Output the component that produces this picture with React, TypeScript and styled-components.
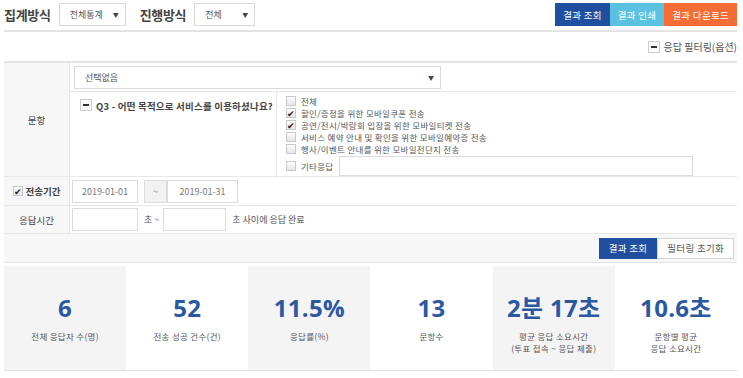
import React from 'react';
import styled, { createGlobalStyle } from 'styled-components';

const GlobalStyle = createGlobalStyle`
  html, body {
    margin: 0;
    padding: 0;
    background: #fff;
    font-family: "Noto Sans CJK KR", "Noto Sans", sans-serif;
    color: #444;
  }
  * { box-sizing: border-box; }
`;

const Page = styled.div`
  width: 743px;
  padding: 0 6px 0 4px;
`;

const TopBar = styled.div`
  display: flex;
  align-items: center;
  height: 32px;
  border-bottom: 2px solid #e3e3e3;
  padding-bottom: 2px;
`;

const BarTitle = styled.span`
  font-size: 13px;
  font-weight: 700;
  color: #444;
  margin-right: 8px;
  letter-spacing: -0.3px;
`;

const Select = styled.div<{ $w: number }>`
  width: ${({ $w }) => $w}px;
  height: 23px;
  border: 1px solid #d9d9d9;
  display: flex;
  align-items: center;
  justify-content: space-between;
  padding: 0 6px 0 10px;
  font-size: 9px;
  color: #555;
  margin-right: 14px;
  background: #fff;
`;

const Caret = styled.span`
  font-size: 6px;
  color: #444;
`;

const Spacer = styled.div`
  flex: 1;
`;

const BarButton = styled.button<{ $bg: string }>`
  height: 23px;
  border: none;
  background: ${({ $bg }) => $bg};
  color: #fff;
  font-family: inherit;
  font-size: 9.5px;
  padding: 0 8px;
  letter-spacing: 0.3px;
  margin-top: 1px;
`;

const FilterToggleRow = styled.div`
  display: flex;
  justify-content: flex-end;
  align-items: center;
  height: 29px;
  font-size: 10px;
  color: #555;
  gap: 4px;
  padding-right: 0;
`;

const MinusBox = styled.span`
  width: 12px;
  height: 12px;
  border: 1px solid #ccc;
  display: inline-flex;
  align-items: center;
  justify-content: center;
  background: #fff;
  flex-shrink: 0;
  &::after {
    content: '';
    width: 6px;
    height: 2px;
    background: #333;
  }
`;

const FilterTable = styled.div`
  border-top: 2px solid #e3e3e3;
  border-bottom: 1px solid #e3e3e3;
`;

const Row = styled.div<{ $h: number }>`
  display: flex;
  height: ${({ $h }) => $h}px;
  border-bottom: 1px solid #e8e8e8;
`;

const Label = styled.div`
  width: 66px;
  flex-shrink: 0;
  background: #f7f7f7;
  border-right: 1px solid #e5e5e5;
  display: flex;
  align-items: center;
  justify-content: center;
  font-size: 9.5px;
  color: #444;
  gap: 3px;
`;

const BoldLabel = styled.span`
  font-weight: 700;
  font-size: 9.5px;
`;

const Cell = styled.div`
  flex: 1;
  display: flex;
  flex-direction: column;
`;

const SubRow = styled.div<{ $h?: number }>`
  display: flex;
  align-items: center;
  height: ${({ $h }) => ($h ? `${$h}px` : 'auto')};
  flex-shrink: 0;
  padding: 0 4px;
  border-bottom: 1px solid #e8e8e8;
`;

const QuestionRow = styled.div`
  display: flex;
  flex: 1;
`;

const QuestionCell = styled.div`
  width: 207px;
  border-right: 1px solid #e8e8e8;
  display: flex;
  align-items: flex-start;
  gap: 4px;
  padding: 7px 0 0 10px;
  font-size: 9.5px;
  font-weight: 700;
  color: #444;
  letter-spacing: 0.2px;
`;

const OptionList = styled.div`
  flex: 1;
  display: flex;
  flex-direction: column;
  padding: 3px 0 2px 9px;
`;

const Option = styled.label`
  display: flex;
  align-items: center;
  gap: 5px;
  height: 12px;
  font-size: 8.5px;
  color: #555;
  letter-spacing: 0.3px;
`;

const Check = styled.span<{ $on?: boolean }>`
  width: 10px;
  height: 10px;
  border: 1px solid #c8c8c8;
  background: linear-gradient(#fdfdfd, #e6e6e6);
  display: inline-flex;
  align-items: center;
  justify-content: center;
  flex-shrink: 0;
  font-size: 9px;
  line-height: 1;
  color: #222;
  &::after {
    content: '${({ $on }) => ($on ? '✔' : '')}';
  }
`;

const EtcOption = styled(Option)`
  height: 21px;
`;

const TextInput = styled.div<{ $w: number; $h?: number; $gray?: boolean }>`
  width: ${({ $w }) => $w}px;
  height: ${({ $h }) => $h ?? 23}px;
  border: 1px solid #dcdcdc;
  background: ${({ $gray }) => ($gray ? '#f2f2f2' : '#fff')};
  display: flex;
  align-items: center;
  justify-content: center;
  font-size: 9px;
  color: #777;
  flex-shrink: 0;
`;

const EtcInput = styled(TextInput)`
  margin-left: 1px;
`;

const InlineRow = styled.div`
  display: flex;
  align-items: center;
  padding-left: 2px;
  font-size: 9px;
  color: #555;
`;

const Gap = styled.span<{ $w: number }>`
  display: inline-block;
  width: ${({ $w }) => $w}px;
`;

const ActionRow = styled.div`
  display: flex;
  justify-content: flex-end;
  align-items: center;
  height: 28px;
  background: #f7f7f7;
  padding-right: 3px;
`;

const ActionButton = styled.button<{ $primary?: boolean }>`
  height: 21px;
  font-family: inherit;
  font-size: 9.5px;
  padding: 0 9px;
  border: 1px solid ${({ $primary }) => ($primary ? '#1f4f9e' : '#d6d6d6')};
  background: ${({ $primary }) => ($primary ? '#1f4f9e' : '#fff')};
  color: ${({ $primary }) => ($primary ? '#fff' : '#555')};
  letter-spacing: 0.3px;
`;

const Stats = styled.div`
  display: grid;
  grid-template-columns: repeat(6, 1fr);
  margin-top: 3px;
  border-bottom: 1px solid #e3e3e3;
  height: 105px;
`;

const Stat = styled.div<{ $shade: boolean }>`
  background: ${({ $shade }) => ($shade ? '#f4f4f5' : '#fff')};
  display: flex;
  flex-direction: column;
  align-items: center;
  padding-top: 27px;
`;

const StatValue = styled.div`
  font-family: "Open Sans", "Noto Sans CJK KR", sans-serif;
  font-weight: 700;
  font-size: 24px;
  line-height: 30px;
  color: #2a58a3;
  letter-spacing: 0.3px;
`;

const StatLabel = styled.div`
  margin-top: 7px;
  font-size: 8.5px;
  line-height: 12px;
  color: #555;
  text-align: center;
  letter-spacing: 0.3px;
`;

const options = [
  { text: '전체', on: false },
  { text: '할인/증정을 위한 모바일쿠폰 전송', on: true },
  { text: '공연/전시/박람회 입장을 위한 모바일티켓 전송', on: true },
  { text: '서비스 예약 안내 및 확인을 위한 모바일예약증 전송', on: false },
  { text: '행사/이벤트 안내를 위한 모바일전단지 전송', on: false },
];

const stats = [
  { value: '6', label: ['전체 응답자 수(명)'] },
  { value: '52', label: ['전송 성공 건수(건)'] },
  { value: '11.5%', label: ['응답률(%)'] },
  { value: '13', label: ['문항수'] },
  { value: '2분 17초', label: ['평균 응답 소요시간', '(투표 접속 ~ 응답 제출)'] },
  { value: '10.6초', label: ['문항별 평균', '응답 소요시간'] },
];

export default function App() {
  return (
    <Page>
      <GlobalStyle />
      <TopBar>
        <BarTitle>집계방식</BarTitle>
        <Select $w={67}>
          전체통계 <Caret>▼</Caret>
        </Select>
        <BarTitle>진행방식</BarTitle>
        <Select $w={61}>
          전체 <Caret>▼</Caret>
        </Select>
        <Spacer />
        <BarButton $bg="#1f4f9e">결과 조회</BarButton>
        <BarButton $bg="#5bc1e0">결과 인쇄</BarButton>
        <BarButton $bg="#f56c36">결과 다운로드</BarButton>
      </TopBar>

      <FilterToggleRow>
        <MinusBox />
        응답 필터링(옵션)
      </FilterToggleRow>

      <FilterTable>
        <Row $h={114}>
          <Label>문항</Label>
          <Cell>
            <SubRow $h={29}>
              <Select $w={367}>
                선택없음 <Caret>▼</Caret>
              </Select>
            </SubRow>
            <QuestionRow>
              <QuestionCell>
                <MinusBox />
                Q3 - 어떤 목적으로 서비스를 이용하셨나요?
              </QuestionCell>
              <OptionList>
                {options.map((o) => (
                  <Option key={o.text}>
                    <Check $on={o.on} />
                    {o.text}
                  </Option>
                ))}
                <EtcOption>
                  <Check />
                  기타응답
                  <EtcInput $w={354} $h={20} />
                </EtcOption>
              </OptionList>
            </QuestionRow>
          </Cell>
        </Row>
        <Row $h={29}>
          <Label>
            <Check $on />
            <BoldLabel>전송기간</BoldLabel>
          </Label>
          <InlineRow>
            <TextInput $w={66}>2019-01-01</TextInput>
            <Gap $w={6} />
            <TextInput $w={23} $gray>~</TextInput>
            <TextInput $w={71}>2019-01-31</TextInput>
          </InlineRow>
        </Row>
        <Row $h={28}>
          <Label>응답시간</Label>
          <InlineRow>
            <TextInput $w={66} />
            <Gap $w={6} />
            초 ~
            <Gap $w={4} />
            <TextInput $w={63} />
            <Gap $w={6} />
            초 사이에 응답 완료
          </InlineRow>
        </Row>
        <ActionRow>
          <ActionButton $primary>결과 조회</ActionButton>
          <ActionButton>필터링 초기화</ActionButton>
        </ActionRow>
      </FilterTable>

      <Stats>
        {stats.map((s, i) => (
          <Stat key={s.value} $shade={i % 2 === 0}>
            <StatValue>{s.value}</StatValue>
            <StatLabel>
              {s.label.map((l) => (
                <div key={l}>{l}</div>
              ))}
            </StatLabel>
          </Stat>
        ))}
      </Stats>
    </Page>
  );
}
